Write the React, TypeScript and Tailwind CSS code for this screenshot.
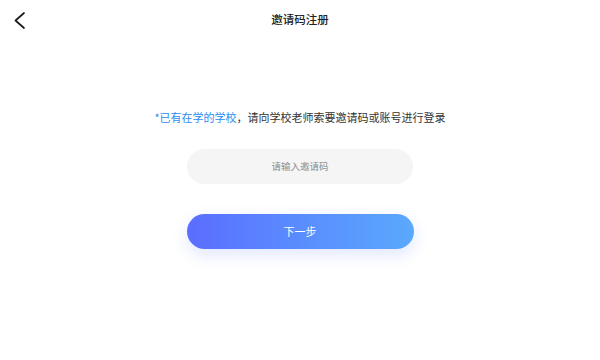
export default function App() {
  return (
    <div
      className="w-[600px] h-[360px] bg-white flex flex-col items-center"
      style={{ fontFamily: '"Noto Sans CJK SC", "Noto Sans", sans-serif' }}
    >
      {/* Header */}
      <div className="relative w-full h-10 flex items-center justify-center">
        <button className="absolute left-[12px] top-[11px] text-[#1a1a1a]">
          <svg width="16" height="19" viewBox="0 0 16 19" fill="none" stroke="currentColor" strokeWidth="1.7" strokeLinecap="round" strokeLinejoin="round">
            <polyline points="12,2 3.5,9.5 12,17" />
          </svg>
        </button>
        <span className="text-[11.5px] font-medium text-[#222]">邀请码注册</span>
      </div>

      {/* Hint */}
      <p className="mt-[68px] text-[11px] leading-[18px] text-[#333]">
        <span className="text-[#2d8cf0]">*已有在学的学校</span>，请向学校老师索要邀请码或账号进行登录
      </p>

      {/* Invite code input */}
      <div className="mt-[23px] w-[226px] h-[35px] rounded-full bg-[#f5f5f5] flex items-center justify-center">
        <input
          placeholder="请输入邀请码"
          className="w-full bg-transparent text-center text-[9.5px] text-[#333] placeholder:text-[#8f8f8f] outline-none"
        />
      </div>

      {/* Next button */}
      <button className="mt-[30px] w-[227px] h-[35px] rounded-full bg-gradient-to-r from-[#5a6dff] to-[#5aa9fc] text-white text-[11px] shadow-[0_6px_16px_rgba(90,120,255,0.18)]">
        下一步
      </button>
    </div>
  )
}
